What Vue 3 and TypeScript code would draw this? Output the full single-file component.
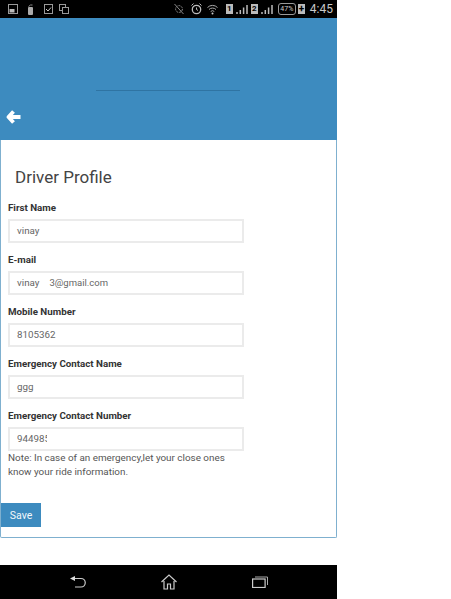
<template>
  <div class="screen">
    <div class="status-bar">
      <div class="status-left">
        <svg class="notif-a" width="10" height="10" viewBox="0 0 10 10"><rect x="0.5" y="0.5" width="9" height="9" fill="none" stroke="#999" /><rect x="1.5" y="5" width="5" height="3.500" fill="#bbb" /></svg>
        <svg class="notif-b" width="7" height="11" viewBox="0 0 7 11"><rect x="1" y="3" width="5" height="8" rx="1" fill="#aaa" /><path d="M1.500 2.500 3.500 1h2" fill="none" stroke="#888" /></svg>
        <svg class="notif-c" width="9" height="10" viewBox="0 0 9 10"><rect x="0.5" y="0.500" width="8" height="9" fill="none" stroke="#999" /><path d="M2 5l2 2 3-3.500" fill="none" stroke="#ccc" /></svg>
        <svg class="notif-d" width="10" height="10" viewBox="0 0 10 10"><rect x="0.500" y="0.500" width="6" height="6" fill="none" stroke="#999" /><rect x="3.500" y="3.500" width="6" height="6" fill="#000" stroke="#999" /></svg>
      </div>
      <div class="status-right">
        <svg class="sys-mute" width="10" height="12" viewBox="0 0 10 12"><circle cx="5" cy="6" r="3.400" fill="none" stroke="#888" stroke-dasharray="2 1" /><path d="M0.500 1l9 10" stroke="#888" /></svg>
        <svg class="sys-alarm" width="11" height="12" viewBox="0 0 11 12"><circle cx="5.500" cy="6.500" r="4.200" fill="none" stroke="#bbb" stroke-width="1.300" /><path d="M5.500 4.500v2l1.500 1M0.500 2.500l2-2M10.500 2.500l-2-2" fill="none" stroke="#bbb" /></svg>
        <svg class="sys-wifi" width="11" height="12" viewBox="0 0 11 12"><path d="M0.500 4.500a7 7 0 0 1 10 0M2 6.500a5 5 0 0 1 7 0M3.700 8.500a2.600 2.600 0 0 1 3.600 0" fill="none" stroke="#aaa" /><circle cx="5.500" cy="10.500" r="1" fill="#ccc" /></svg>
        <span class="sim sim-first">1</span>
        <svg class="bars" width="12" height="11" viewBox="0 0 12 11"><path d="M1 10V8M4.300 10V6M7.600 10V3.500M11 10V1" stroke="#bbb" stroke-width="1.500" /></svg>
        <span class="sim">2</span>
        <svg class="bars" width="12" height="11" viewBox="0 0 12 11"><path d="M1 10V8M4.300 10V6M7.600 10V3.500M11 10V1" stroke="#bbb" stroke-width="1.500" /></svg>
        <span class="battery">47%</span>
        <span class="plug">+</span>
        <span class="clock">4:45</span>
      </div>
    </div>

    <header class="app-header">
      <div class="title-line"></div>
      <svg class="back" width="16" height="16" viewBox="0 0 16 16">
        <path d="M7.500 2.400 2.500 8l5 5.600M3 8H14.500" fill="none" stroke="#fff" stroke-width="3.800" stroke-linejoin="round" />
      </svg>
    </header>

    <main class="card">
      <h1>Driver Profile</h1>
      <div v-for="field in fields" :key="field.label" class="field">
        <label>{{ field.label }}</label>
        <div class="input">
          <span :class="{ clipped: field.clip }">{{ field.value }}</span>
          <span v-if="field.rest" class="rest">{{ field.rest }}</span>
        </div>
      </div>
      <p class="note">Note: In case of an emergency,let your close ones know your ride information.</p>
      <button class="save">Save</button>
    </main>

    <footer class="nav-bar">
      <svg width="16" height="12" viewBox="0 0 16 12"><path d="M3 2.500h8a4 4 0 0 1 0 8.500H5" fill="none" stroke="#ccc" stroke-width="1.200" /><path d="M0 2.500 5 0v5z" fill="#ddd" /></svg>
      <svg width="16" height="16" viewBox="0 0 16 16"><path d="M0.500 8 8 1l7.500 7M3 7v8h3.500V10h3v5H13V7" fill="none" stroke="#ccc" stroke-width="1.200" /></svg>
      <svg width="16" height="12" viewBox="0 0 16 12"><rect x="0.600" y="3" width="12.500" height="8.500" fill="none" stroke="#ccc" stroke-width="1.200" /><path d="M3 1h12.500v8" fill="none" stroke="#aaa" /></svg>
    </footer>
  </div>
</template>

<script setup lang="ts">
interface Field {
  label: string
  value: string
  rest?: string
  clip?: boolean
}

const fields: Field[] = [
  { label: 'First Name', value: 'vinay' },
  { label: 'E-mail', value: 'vinay', rest: '3@gmail.com' },
  { label: 'Mobile Number', value: '8105362' },
  { label: 'Emergency Contact Name', value: 'ggg' },
  { label: 'Emergency Contact Number', value: '944985', clip: true }
]
</script>

<style>
body {
  background: #fff;
}
</style>

<style scoped>
.screen {
  width: 337px;
  height: 599px;
  display: flex;
  flex-direction: column;
  font-family: Roboto, "Liberation Sans", sans-serif;
}

.status-bar {
  height: 18px;
  background: #000;
  display: flex;
  justify-content: space-between;
  align-items: center;
  padding: 0 4px 0 8px;
  flex: none;
}

.status-left {
  display: flex;
  align-items: center;
}

.notif-b {
  margin-left: 9px;
}

.notif-c {
  margin-left: 10px;
}

.notif-d {
  margin-left: 6px;
}

.status-right {
  display: flex;
  align-items: center;
  color: #c8c8c8;
}

.sys-alarm {
  margin-left: 7px;
}

.sys-wifi {
  margin-left: 5px;
}

.sim {
  width: 7px;
  height: 10px;
  margin-left: 3px;
  background: #bbb;
  color: #000;
  font-size: 8px;
  font-weight: 700;
  line-height: 10px;
  text-align: center;
}

.sim-first {
  margin-left: 8px;
}

.bars {
  margin-left: 3px;
}

.battery {
  width: 16px;
  height: 10px;
  margin-left: 5px;
  border: 1px solid #999;
  border-radius: 3px;
  font-size: 7px;
  line-height: 10px;
  text-align: center;
  color: #ccc;
}

.plug {
  width: 7px;
  height: 10px;
  margin-left: 2px;
  background: #bbb;
  color: #000;
  font-size: 10px;
  font-weight: 700;
  line-height: 10px;
  text-align: center;
}

.clock {
  font-size: 12px;
  margin-left: 5px;
}

.app-header {
  height: 122px;
  flex: none;
  background: #3d8bbf;
  position: relative;
}

.title-line {
  position: absolute;
  left: 96px;
  top: 72px;
  width: 144px;
  height: 1px;
  background: #2f74a3;
}

.back {
  position: absolute;
  left: 6px;
  top: 91px;
}

.card {
  height: 398px;
  flex: none;
  box-sizing: border-box;
  background: #fff;
  border: 1px solid #7fb0cf;
  border-top: none;
  border-radius: 0 0 2px 2px;
  padding: 26px 0 0 7px;
  color: #333;
}

h1 {
  margin: 0 0 13px 7px;
  font-size: 17px;
  font-weight: 400;
  line-height: 22px;
  color: #444;
}

.field {
  margin-bottom: 10px;
}

.field:last-of-type {
  margin-bottom: 0;
}

label {
  display: block;
  font-size: 9.750px;
  font-weight: 700;
  line-height: 14px;
  margin-bottom: 4px;
  color: #333;
}

.input {
  width: 236px;
  height: 24px;
  box-sizing: border-box;
  border: 2px solid #ebebeb;
  padding-left: 7px;
  font-size: 9.800px;
  line-height: 20px;
  color: #666;
  display: flex;
  background: #fff;
}

.clipped {
  width: 29.500px;
  overflow: hidden;
  white-space: nowrap;
}

.rest {
  margin-left: 10px;
  font-size: 9.500px;
  white-space: nowrap;
}

.note {
  margin: 0;
  width: 236px;
  font-size: 9.900px;
  line-height: 14px;
  color: #555;
}

.save {
  display: block;
  margin: 24px 0 0 -7px;
  width: 40px;
  height: 24px;
  padding: 0;
  border: none;
  background: #3d8bbf;
  color: #f4f8fb;
  font-family: inherit;
  font-size: 10.500px;
}

.nav-bar {
  margin-top: 27px;
  height: 34px;
  flex: none;
  background: #000;
  display: flex;
  align-items: center;
  justify-content: center;
  gap: 75px;
}
</style>
